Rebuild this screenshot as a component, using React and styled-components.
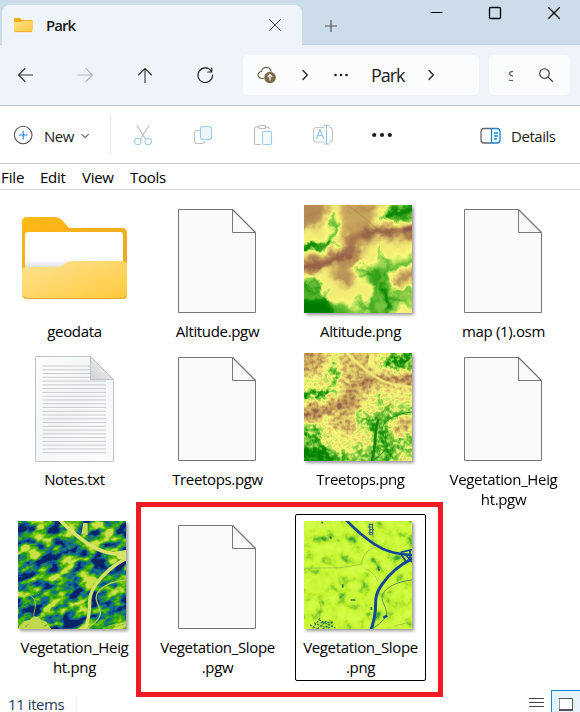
import React from "react";
import styled, { createGlobalStyle } from "styled-components";

const Global = createGlobalStyle`
  * { box-sizing: border-box; }
  body { margin: 0; background: #fff; overflow: hidden; }
`;

const Window = styled.div`
  position: relative;
  display: flex;
  flex-direction: column;
  width: 580px;
  height: 712px;
  overflow: hidden;
  background: #fff;
  color: #1b1b1b;
  font-family: "Open Sans", "Noto Sans", sans-serif;
  font-size: 15px;
  svg { display: block; flex: none; }
`;

const TitleBar = styled.header`
  display: flex;
  height: 45px;
  flex: none;
  padding-left: 2px;
  background: #cddceb;
  box-shadow: inset 0 -1px #bccfe2;
`;

const Tab = styled.div`
  display: flex;
  align-items: center;
  width: 300px;
  height: 40px;
  margin-top: 5px;
  padding: 0 20px 0 12px;
  border-radius: 8px 8px 0 0;
  background: #eff4fa;
`;

const TabTitle = styled.span`
  flex: 1;
  margin-left: 13px;
  font-size: 15px;
  font-weight: 600;
  letter-spacing: -0.95px;
`;

const NewTab = styled.div`
  padding: 20px 0 0 23px;
`;

const Controls = styled.div`
  display: flex;
  gap: 45px;
  margin-left: auto;
  padding: 6px 19px 0 0;
`;

const NavBar = styled.nav`
  display: flex;
  align-items: center;
  height: 61px;
  flex: none;
  padding-left: 15px;
  background: #eff4fa;
  border-bottom: 1px solid #b9c8d8;
`;

const NavButtons = styled.div`
  display: flex;
  gap: 40px;
  margin-right: 28px;
`;

const Field = styled.div`
  display: flex;
  align-items: center;
  width: ${(p) => p.$width}px;
  height: 40px;
  margin-right: 10px;
  padding-left: ${(p) => p.$indent}px;
  border-radius: 5px;
  background: #fbfcfe;
`;

const Separator = styled.div`
  display: flex;
  justify-content: center;
  width: 55px;
`;

const Crumb = styled.span`
  width: 34px;
  margin: 0 22px 0 21px;
  font-size: 18px;
  letter-spacing: -1.1px;
  white-space: nowrap;
`;

const SearchText = styled.span`
  width: 5px;
  height: 13px;
  margin-right: 25px;
  overflow: hidden;
  color: #555;
  font-size: 15px;
  line-height: 13px;
`;

const Toolbar = styled.div`
  display: flex;
  align-items: center;
  height: 58px;
  flex: none;
  padding: 0 0 0 13px;
  border-bottom: 1px solid #b9c6d8;
`;

const ToolLabel = styled.span`
  width: ${(p) => p.$width}px;
  margin-left: ${(p) => p.$gap}px;
  padding-top: 2px;
  letter-spacing: ${(p) => p.$track}px;
  white-space: nowrap;
`;

const Divider = styled.div`
  width: 1px;
  height: 39px;
  margin: 0 21px 0 20px;
  background: #e8e8ea;
`;

const ToolIcons = styled.div`
  display: flex;
  align-items: center;
  gap: 38px;
  margin-right: 87px;
  padding-top: 1px;
`;

const MenuBar = styled.div`
  display: flex;
  align-items: center;
  height: 26px;
  flex: none;
  padding: 0 0 0 1px;
  border-bottom: 1px solid #d9d9d9;
  color: #000;
`;

const MenuItem = styled.span`
  width: ${(p) => p.$width}px;
  letter-spacing: ${(p) => p.$track}px;
  line-height: 20px;
`;

const Files = styled.main`
  display: grid;
  grid-template-columns: repeat(4, 143px);
  row-gap: 11px;
  align-content: start;
  height: 500px;
  flex: none;
  padding: 15px 0 0 3px;
`;

const FileItem = styled.div`
  position: relative;
  display: flex;
  flex-direction: column;
  align-items: center;
  padding-bottom: 1px;
  color: #000;
  ${(p) =>
    p.$selected &&
    `&::after {
      content: "";
      position: absolute;
      inset: -7px 6px -3px 6px;
      border: 1px solid #000;
      border-radius: 2px;
    }`}
`;

const Art = styled.div`
  width: 108px;
  height: 108px;
  margin: 0 5px 8px 0;
`;

const Picture = styled.svg`
  width: 108px;
  height: 108px;
  overflow: hidden;
  box-shadow: 2px 2px 3px rgba(0, 0, 0, 0.4);
`;

const Name = styled.span`
  display: flex;
  flex-direction: column;
  align-items: center;
  line-height: 20px;
  letter-spacing: -0.34px;
  white-space: nowrap;
`;

const Marker = styled.div`
  position: absolute;
  left: 136px;
  top: 502px;
  width: 307px;
  height: 195px;
  border: 5px solid #ee1b24;
`;

const StatusBar = styled.footer`
  display: flex;
  align-items: flex-end;
  height: 22px;
  flex: none;
  padding-left: 8px;
  color: #1e395b;
`;

const Count = styled.span`
  width: 69px;
  height: 16px;
  line-height: 16px;
  letter-spacing: -0.42px;
  border-right: 1px solid #f1f1f1;
`;

const ListToggle = styled.div`
  margin-left: auto;
  padding-right: 7px;
`;

const GridToggle = styled.div`
  width: 29px;
  height: 22px;
  padding: 7px 0 0 7px;
  border: 1px solid #1583d8;
  border-width: 1px 0 0 1px;
  background: #e5f3fb;
`;

const Icon = ({ size = 20, w, h, color = "#333", sw = 1.1, children }) => (
  <svg
    width={w || size}
    height={h || size}
    viewBox={`0 0 ${w || size} ${h || size}`}
    fill="none"
    stroke={color}
    strokeWidth={sw}
    strokeLinecap="round"
    strokeLinejoin="round"
  >
    {children}
  </svg>
);

const Cross = ({ color, sw }) => (
  <Icon size={14} color={color} sw={sw}>
    <path d="M1.5 1.5l11 11M12.5 1.5l-11 11" />
  </Icon>
);

const Dots = ({ w, r, step }) => (
  <svg width={w} height="6" viewBox={`0 0 ${w} 6`} fill="#1b1b1b">
    {[-1, 0, 1].map((i) => (
      <circle key={i} cx={w / 2 + i * step} cy="3" r={r} />
    ))}
  </svg>
);

const Chevron = () => (
  <Icon w={8} h={12} sw={1.3} color="#222">
    <path d="M2 1.5L6.3 6 2 10.5" />
  </Icon>
);

const TabFolder = () => (
  <svg width="19" height="16" viewBox="0 0 19 16">
    <defs>
      <linearGradient id="tabFolder" x1="0" y1="0" x2="1" y2="1">
        <stop offset="0" stopColor="#ffe08a" />
        <stop offset="1" stopColor="#ffc93c" />
      </linearGradient>
    </defs>
    <path d="M0 2q0-1 1-1h5l2 2h9.500q1 0 1 1v8H0z" fill="#f5ad16" />
    <path d="M0 5h7l1.500-1H18.500v10q0 1-1 1H1q-1 0-1-1z" fill="url(#tabFolder)" />
    <path d="M0.500 14.600h17.500" stroke="#e8a520" strokeWidth=".8" />
  </svg>
);

const FolderArt = () => (
  <svg width="109" height="108" viewBox="0 0 109 108">
    <defs>
      <linearGradient id="folderFront" x1="0" y1="0" x2="1" y2="1">
        <stop offset="0" stopColor="#ffe394" />
        <stop offset="1" stopColor="#ffc93a" />
      </linearGradient>
      <linearGradient id="folderBack" x1="0" y1="0" x2="1" y2="1">
        <stop offset="0" stopColor="#ffba12" />
        <stop offset="1" stopColor="#e5a42a" />
      </linearGradient>
      <linearGradient id="folderPaper" x1="0" y1="0" x2="0" y2="1">
        <stop offset="0.800" stopColor="#fff" />
        <stop offset="1" stopColor="#dfe1e8" />
      </linearGradient>
    </defs>
    <path d="M4 17q0-5 5-5H37q4 0 7 3l7 8H104q5 0 5 5V88H4z" fill="url(#folderBack)" />
    <path d="M7 30q0-3 3-3H102q3 0 3 3V56L52 57l-8 5H7z" fill="url(#folderPaper)" />
    <path d="M4 66q0-4 4-4H39q3 0 6-2l4-3q2-1 5-1H104q5 0 5 4V89q0 5-5 5H9q-5 0-5-5z" fill="url(#folderFront)" />
    <path d="M5 91q1.500 2.500 4 2.500H104q3.500 0 4.500-3" fill="none" stroke="#eaa72a" strokeWidth="1.200" />
  </svg>
);

const BlankArt = () => (
  <svg width="108" height="108" viewBox="0 0 108 108">
    <path d="M17.500 4.500H71.500L94.500 27.500V107.500H17.500z" fill="#fafafa" stroke="#777" />
    <path d="M71.500 4.500V27.500H94.500" fill="none" stroke="#777" />
    <path d="M71.500 4.500L94.500 27.500" stroke="#777" strokeWidth="1.300" />
  </svg>
);

const TextArt = () => (
  <svg width="108" height="109" viewBox="0 0 108 109">
    <defs>
      <linearGradient id="noteFold" x1="0" y1="1" x2="1" y2="0">
        <stop offset="0" stopColor="#d4d4d6" />
        <stop offset="1" stopColor="#f4f4f6" />
      </linearGradient>
      <linearGradient id="notePaper" x1="0" y1="0" x2="1" y2="1">
        <stop offset="0" stopColor="#fcfcfc" />
        <stop offset="0.450" stopColor="#f4f6f7" />
        <stop offset="1" stopColor="#fbfcfd" />
      </linearGradient>
    </defs>
    <path d="M17.500 3.500H72.500L95.500 26.500V108.500H17.500z" fill="url(#notePaper)" stroke="#c2c3c5" />
    {Array.from({ length: 24 }, (_, i) => (
      <path key={i} d={`M24.500 ${13 + i * 3.77}H${i < 4 ? 72 : 88}`} stroke="#c3c6c8" strokeWidth=".9" />
    ))}
    <path d="M72.500 3.500V26.500H95.500z" fill="url(#noteFold)" stroke="#bcbdbf" strokeWidth=".9" />
  </svg>
);

const ROAD_A = "M125 -4C150 22 176 46 212 70S276 98 330 103";
const ROAD_B = "M330 110C296 126 258 156 234 190S216 240 214 268S208 304 200 330";
const TRACK = "M330 176C290 180 256 192 241 212S240 246 246 266S240 300 204 324";

const Terrain = ({ id, rough }) => (
  <Picture viewBox="0 0 324 324">
    <defs>
      <filter id={`${id}Warp`} x="-40" y="-40" width="404" height="404" filterUnits="userSpaceOnUse" colorInterpolationFilters="sRGB">
        <feTurbulence type="fractalNoise" baseFrequency=".028" numOctaves="3" seed="4" result="n" />
        <feDisplacementMap in="SourceGraphic" in2="n" scale="42" xChannelSelector="R" yChannelSelector="G" />
      </filter>
      <filter id={`${id}Ramp`} x="0" y="0" width="324" height="324" filterUnits="userSpaceOnUse" colorInterpolationFilters="sRGB">
        <feComponentTransfer>
          <feFuncR type="table" tableValues="0 .08 .5 .98 .88 .74 .6 .5" />
          <feFuncG type="table" tableValues=".49 .56 .79 .98 .8 .58 .4 .28" />
          <feFuncB type="table" tableValues="0 .04 .26 .48 .42 .34 .29 .27" />
        </feComponentTransfer>
      </filter>
      <filter id={`${id}Wide`} x="-80" y="-80" width="490" height="490" filterUnits="userSpaceOnUse" colorInterpolationFilters="sRGB">
        <feGaussianBlur stdDeviation="11" />
      </filter>
      <filter id={`${id}Soft`} x="-60" y="-60" width="450" height="450" filterUnits="userSpaceOnUse" colorInterpolationFilters="sRGB">
        <feGaussianBlur stdDeviation="4" />
      </filter>
      <filter id={`${id}Grain`} x="0" y="0" width="324" height="324" filterUnits="userSpaceOnUse" colorInterpolationFilters="sRGB">
        <feTurbulence type="fractalNoise" baseFrequency=".07 .09" numOctaves="4" seed="8" />
        <feColorMatrix values="3 0 0 0 -1.150  3 0 0 0 -1.150  3 0 0 0 -1.150  0 0 0 0 1" />
      </filter>
    </defs>
    <g filter={`url(#${id}Ramp)`}>
      <g filter={`url(#${id}Warp)`}>
        <rect x="-60" y="-60" width="450" height="450" fill="#787878" />
        <g filter={`url(#${id}Wide)`} fill="none" strokeLinecap="round">
          <path d="M-60 -60H80L62 40 30 70-60 85z" fill="#bcbcbc" />
          <path d="M100 -60H220L230 45 180 75 125 85z" fill="#acacac" />
          <path d="M-60 194C50 178 100 162 160 132" stroke="#dcdcdc" strokeWidth="34" />
          <path d="M130 104C190 84 215 74 370 90" stroke="#d0d0d0" strokeWidth="38" />
          <path d="M90 190L160 155 168 185 145 240 115 245 80 215z" fill="#b6b6b6" />
          <path d="M262 238L370 182" stroke="#c0c0c0" strokeWidth="24" />
          <path d="M-60 140L35 124 70 118 88 84 84 40" stroke="#5c5c5c" strokeWidth="24" />
          <path d="M228 30L380 -40 370 25 280 45z" fill="#202020" stroke="#404040" strokeWidth="18" />
          <path d="M-60 225L20 220 60 285 125 300 150 380-60 380z" fill="#383838" />
          <path d="M165 195L215 195 250 185 300 166 370 145" stroke="#525252" strokeWidth="32" />
          <path d="M215 215L240 240 230 360" stroke="#3c3c3c" strokeWidth="54" />
          <path d="M150 322L240 300 360 262" stroke="#484848" strokeWidth="40" />
        </g>
        <g filter={`url(#${id}Soft)`} fill="none" stroke="#161616" strokeWidth="6" strokeLinecap="round">
          <path d="M78 114L90 82 84 50 80 25M78 114L106 126M91 68L118 54" opacity=".75" />
          <path d="M-48 140L40 124 80 118" strokeWidth="10" />
          <path d="M-48 128L40 122" strokeWidth="14" />
          <path d="M25 212L42 260 55 285 85 300M42 260L5 240M55 285L78 252M42 240L16 225" opacity=".75" />
          <path d="M245 350L250 285 236 235 250 205 275 185 338 162M250 205L252 178 234 150 218 130" opacity=".75" />
          <path d="M248 310L245 255" strokeWidth="12" />
          <path d="M210 342L218 215M218 212L180 190 158 178M205 205L168 212M240 290L285 265 338 242M262 278L340 308M200 310L160 285" opacity=".7" />
          <path d="M246 34L290 18 360 -5" strokeWidth="16" />
          <path d="M265 48L300 38" strokeWidth="7" opacity=".6" />
          <path d="M-30 350L-30 290 45 290 75 310 110 350z" fill="#000" strokeWidth="14" />
        </g>
        <g filter={`url(#${id}Soft)`} fill="none" strokeLinecap="round">
          <path d="M168 91L220 76 268 83" stroke="#ececec" strokeWidth="9" opacity=".8" />
          <path d="M0 186L75 176 130 155" stroke="#ececec" strokeWidth="10" opacity=".7" />
          <path d="M110 185L155 165M90 220L130 228M150 18L205 12M8 38L50 15M270 232L320 207" stroke="#c8c8c8" strokeWidth="9" opacity=".6" />
        </g>
      </g>
      <path d="M303 74L330 69" stroke="#f4f4f4" strokeWidth="15" strokeLinecap="round" filter={`url(#${id}Soft)`} />
      {!rough && <path d="M130 0C160 20 190 45 222 75L265 92" fill="none" stroke="#d2d2d2" strokeWidth="3" opacity=".5" />}
      {rough && <rect width="324" height="324" filter={`url(#${id}Grain)`} opacity=".2" />}
      {rough && (
        <g fill="none" stroke="#7a7a7a" strokeWidth="8">
          <path d={ROAD_A} />
          <path d="M197 4H211V42L190 38z" fill="#727272" stroke="none" />
        </g>
      )}
    </g>
    {rough && (
      <g fill="none">
        <path d="M262 152C240 168 230 182 224 200" stroke="#7fb03c" strokeWidth="5" />
        <path d="M224 198C210 230 218 275 202 330" stroke="#168413" strokeWidth="8" />
        <path d={TRACK} stroke="#229126" strokeWidth="3" />
      </g>
    )}
  </Picture>
);

const Canopy = () => (
  <Picture viewBox="0 0 324 324">
    <defs>
      <filter id="canopyNoise" x="0" y="0" width="324" height="324" filterUnits="userSpaceOnUse" colorInterpolationFilters="sRGB">
        <feTurbulence type="fractalNoise" baseFrequency=".028 .05" numOctaves="6" seed="22" />
        <feColorMatrix values="2.700 0 0 0 -.9  2.700 0 0 0 -.9  2.700 0 0 0 -.9  0 0 0 0 1" />
        <feComponentTransfer>
          <feFuncR type="table" tableValues=".04 .05 .07 .1 .15 .28 .42 .65 .8" />
          <feFuncG type="table" tableValues=".14 .3 .4 .48 .62 .7 .76 .82 .88" />
          <feFuncB type="table" tableValues=".4 .55 .62 .42 .12 .03 .05 .15 .3" />
        </feComponentTransfer>
      </filter>
    </defs>
    <g transform="rotate(-18 162 162) translate(162 162) scale(1.300) translate(-162 -162)">
      <rect width="324" height="324" filter="url(#canopyNoise)" />
    </g>
    <g fill="none" stroke="#d6e268">
      <path d={ROAD_A} strokeWidth="11" />
      <path d={ROAD_B} strokeWidth="10" />
      <path d={TRACK} strokeWidth="4" stroke="#b3d159" />
      <path d="M288 92L330 86V122L300 114z" fill="#d6e268" stroke="none" />
      <path d="M196 6H209V42L190 40z" fill="#c9dc50" stroke="none" />
      <path d="M-5 330L8 310 20 300 35 296 48 286 62 288 70 298 85 302 95 318 105 330z" fill="#c2d84c" stroke="none" />
      <path d="M48 292C44 270 58 262 49 235L35 220M270 316L325 300M290 318L324 308" stroke="#8fc43c" strokeWidth="3" />
      <path d="M0 316l10-6M22 318l8-8M78 316l10-5" stroke="#55a834" strokeWidth="3" />
    </g>
  </Picture>
);

const Slope = () => (
  <Picture viewBox="0 0 324 324">
    <defs>
      <filter id="slopeNoise" x="0" y="0" width="324" height="324" filterUnits="userSpaceOnUse" colorInterpolationFilters="sRGB">
        <feTurbulence type="fractalNoise" baseFrequency=".03" numOctaves="7" seed="5" />
        <feColorMatrix values="1.700 0 0 0 -.24  1.700 0 0 0 -.24  1.700 0 0 0 -.24  0 0 0 0 1" />
        <feComponentTransfer>
          <feFuncR type="table" tableValues=".2 .5 .72 .79 .8 .83" />
          <feFuncG type="table" tableValues=".65 .8 .92 .97 .98 .99" />
          <feFuncB type="table" tableValues=".2 .18 .18 .21 .24 .28" />
        </feComponentTransfer>
      </filter>
    </defs>
    <rect width="324" height="324" filter="url(#slopeNoise)" />
    <g fill="none" stroke="#10489a">
      <path d={ROAD_A} strokeWidth="8" />
      <path d={ROAD_B} strokeWidth="9" />
      <path d={TRACK} stroke="#3d8262" strokeWidth="2.500" />
      <path d="M290 94L324 86M292 101L306 121M306 102L324 124M318 90V122" strokeWidth="5" />
      <path d="M194 10H208M192 18H206M196 26H210M193 34H208M196 40H206M197 8V40M206 8V42" strokeWidth="3" stroke="#285f8a" />
      <path d="M238 290L250 284" strokeWidth="7" />
      <path d="M222 138L226 150M116 190V200M140 237H154M202 258V267M52 5H57M78 47L82 53" strokeWidth="5" stroke="#28725f" />
      <path d="M218 78C190 84 176 102 172 130L110 140 2 142M184 144C202 150 215 164 222 182M48 300C42 275 60 266 44 240M270 316L322 302" strokeWidth="2" stroke="#8bb653" />
      <path d="M26 322L48 292M40 324L70 298M56 324L84 306M30 306L62 318M45 296L95 322M72 322L90 312M18 312L38 324M50 304H88" strokeWidth="3.500" stroke="#3b7b55" strokeDasharray="7 3" />
    </g>
  </Picture>
);

const files = [
  { art: <FolderArt />, lines: ["geodata"] },
  { art: <BlankArt />, lines: ["Altitude.pgw"] },
  { art: <Terrain id="altitude" />, lines: ["Altitude.png"] },
  { art: <BlankArt />, lines: ["map (1).osm"] },
  { art: <TextArt />, lines: ["Notes.txt"] },
  { art: <BlankArt />, lines: ["Treetops.pgw"] },
  { art: <Terrain id="treetops" rough />, lines: ["Treetops.png"] },
  { art: <BlankArt />, lines: ["Vegetation_Heig", "ht.pgw"] },
  { art: <Canopy />, lines: ["Vegetation_Heig", "ht.png"] },
  { art: <BlankArt />, lines: ["Vegetation_Slope", ".pgw"] },
  { art: <Slope />, lines: ["Vegetation_Slope", ".png"], selected: true },
];

export default function App() {
  return (
    <Window>
      <Global />
      <TitleBar>
        <Tab>
          <TabFolder />
          <TabTitle>Park</TabTitle>
          <Cross color="#444" sw={1} />
        </Tab>
        <NewTab>
          <Icon size={12} color="#555" sw={1.2}><path d="M6 .5v11M.5 6h11" /></Icon>
        </NewTab>
        <Controls>
          <Icon size={14} color="#000" sw={1.1}><path d="M2 6.500h11" /></Icon>
          <Icon size={14} color="#000" sw={1.3}><rect x="1.500" y="1.500" width="11" height="11" rx="1" /></Icon>
          <Cross color="#000" sw={1.2} />
        </Controls>
      </TitleBar>

      <NavBar>
        <NavButtons>
          <Icon><path d="M17.500 10H3.500M10 3.500L3.500 10l6.500 6.500" /></Icon>
          <Icon color="#b2b5ba"><path d="M3 10h14.500M11 3.500l6.500 6.500-6.500 6.500" /></Icon>
          <Icon><path d="M10 17.500v-14M3.500 10L10 3.500l6.500 6.500" /></Icon>
          <Icon color="#222"><path d="M16.300 6.200A7.300 7.300 0 1 0 17.500 10M16.800 3v4h-4" /></Icon>
        </NavButtons>
        <Field $width={236} $indent={14}>
          <svg width="20" height="20" viewBox="0 0 20 20">
            <path d="M6.500 13.500H4.700a3.500 3.500 0 0 1-.2-7C5 3.800 6.800 2.300 9.300 2.300c2.300 0 4.200 1.500 4.800 3.900" fill="none" stroke="#6e6347" strokeWidth="1.200" strokeLinecap="round" />
            <circle cx="13" cy="12.500" r="5.800" fill="#7d6a45" />
            <path d="M13 15.500v-5.500M10.700 12L13 9.700l2.300 2.300" fill="none" stroke="#fff" strokeWidth="1.200" />
          </svg>
          <Separator><Chevron /></Separator>
          <Dots w={18} r={1.3} step={5.5} />
          <Crumb>Park</Crumb>
          <Chevron />
        </Field>
        <Field $width={81} $indent={19}>
          <SearchText>S</SearchText>
          <Icon size={16} color="#333"><circle cx="6.500" cy="6.500" r="4.800" /><path d="M10 10l4.500 4.500" /></Icon>
        </Field>
      </NavBar>

      <Toolbar>
        <Icon color="#555"><circle cx="10.200" cy="10" r="8.800" /><path d="M10.200 6v8M6.200 10h8" stroke="#1583d8" /></Icon>
        <ToolLabel $width={36} $gap={11} $track={-0.5}>New</ToolLabel>
        <Icon size={10} color="#777"><path d="M2 4.500l3.200 3 3.200-3" /></Icon>
        <Divider />
        <ToolIcons>
          <Icon size={22} color="#b9bbbe"><path d="M5 1.500l8.500 13.500M17 1.500L8.500 15" /><g stroke="#9accf2"><circle cx="5.800" cy="17.500" r="3.200" /><circle cx="16.200" cy="17.500" r="3.200" /></g></Icon>
          <Icon size={22} color="#c0c0c2"><path d="M7 6.500H5.500q-3 0-3 3v7q0 3 3 3h4.500q2.500 0 3-2" /><rect x="8.500" y="2.500" width="11" height="13" rx="2.500" fill="#eef6fc" stroke="#9accf2" /></Icon>
          <Icon size={22} color="#b9bbbe"><path d="M7 3H4q-1.500 0-1.500 1.500v14.500Q2.500 20.500 4 20.500h4.500M13 3h2.500q1.500 0 1.500 1.500v1" /><rect x="6.500" y="1.500" width="7.500" height="3" rx="1.500" /><rect x="10.500" y="7.500" width="9" height="13" rx="1.500" fill="#f4faff" stroke="#9accf2" /></Icon>
          <Icon size={22} color="#c4c5c8"><path d="M12 3.500H4.500q-3 0-3 3v8.500q0 3 3 3H12M17.500 3.500q3 0 3 3v8.500q0 3-3 3" /><path d="M4.500 14.500l3.500-9 3.500 9M5.800 11.500h4.400M14.500 1.500v18.500M12 1.500h5M12 20h5" stroke="#8dc5f0" /></Icon>
          <Dots w={20} r={2.1} step={7.8} />
        </ToolIcons>
        <Icon size={22} color="#666" sw={1.3}>
          <path d="M12 4.500H5q-3 0-3 3v8.500q0 3 3 3h7" />
          <path d="M12.500 4.500H18q3 0 3 3v8.500q0 3-3 3H12.500zM15.500 9h3M15.500 12h3M15.500 15h2" stroke="#1583d8" />
        </Icon>
        <ToolLabel $width={50} $gap={10} $track={-0.45}>Details</ToolLabel>
      </Toolbar>

      <MenuBar>
        <MenuItem $width={39} $track={-0.1}>File</MenuItem>
        <MenuItem $width={42} $track={-0.25}>Edit</MenuItem>
        <MenuItem $width={48} $track={-0.3}>View</MenuItem>
        <MenuItem $width={50} $track={-0.3}>Tools</MenuItem>
      </MenuBar>

      <Files>
        {files.map((f) => (
          <FileItem key={f.lines.join("")} $selected={f.selected}>
            <Art>{f.art}</Art>
            <Name>{f.lines.map((l) => <span key={l}>{l}</span>)}</Name>
          </FileItem>
        ))}
      </Files>

      <StatusBar>
        <Count>11 items</Count>
        <ListToggle>
          <Icon w={15} h={15} color="#444" sw={1}><path d="M.5 1.500h14M.5 5.500h14M.5 9.500h14" /></Icon>
        </ListToggle>
        <GridToggle>
          <Icon w={14} h={14} color="#555" sw={1}><rect x=".5" y=".5" width="13" height="12" fill="#fff" /><path d="M1 12h12" strokeWidth="2" /></Icon>
        </GridToggle>
      </StatusBar>
      <Marker />
    </Window>
  );
}
